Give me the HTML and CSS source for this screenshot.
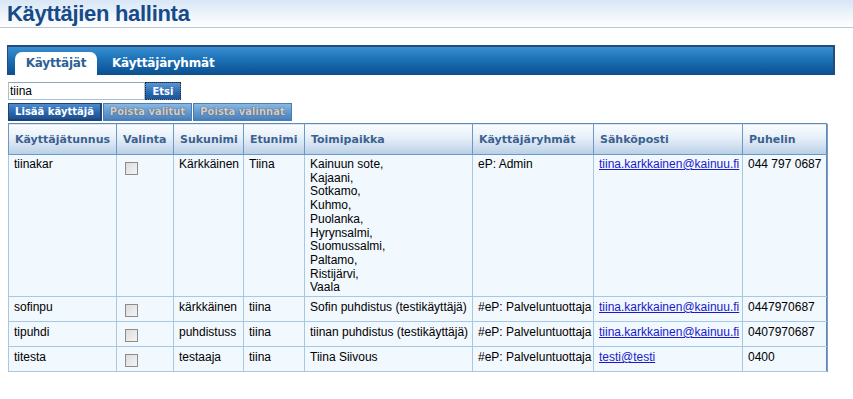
FILE: index.html
```html
<!DOCTYPE html>
<html lang="fi">
<head>
<meta charset="utf-8">
<title>Käyttäjien hallinta</title>
<link rel="stylesheet" href="styles.css">
</head>
<body>
<header class="page-head">
  <h1 class="page-title">Käyttäjien hallinta</h1>
</header>
<main class="content">
  <nav class="tabbar">
    <span class="tab tab-active">Käyttäjät</span>
    <span class="tab">Käyttäjäryhmät</span>
  </nav>
  <form class="search">
    <input class="search-input" type="text" value="tiina">
    <button type="button" class="btn btn-search">Etsi</button>
  </form>
  <div class="actions">
    <button type="button" class="btn btn-add">Lisää käyttäjä</button>
    <button type="button" class="btn btn-disabled">Poista valitut</button>
    <button type="button" class="btn btn-disabled">Poista valinnat</button>
  </div>
  <table class="users">
    <colgroup>
      <col class="c1"><col class="c2"><col class="c3"><col class="c4"><col class="c5"><col class="c6"><col class="c7"><col class="c8">
    </colgroup>
    <thead>
      <tr>
        <th>Käyttäjätunnus</th><th>Valinta</th><th>Sukunimi</th><th>Etunimi</th><th>Toimipaikka</th><th>Käyttäjäryhmät</th><th>Sähköposti</th><th>Puhelin</th>
      </tr>
    </thead>
    <tbody>
      <tr>
        <td>tiinakar</td>
        <td><input type="checkbox" class="chk"></td>
        <td>Kärkkäinen</td>
        <td>Tiina</td>
        <td>Kainuun sote,<br>Kajaani,<br>Sotkamo,<br>Kuhmo,<br>Puolanka,<br>Hyrynsalmi,<br>Suomussalmi,<br>Paltamo,<br>Ristijärvi,<br>Vaala</td>
        <td>eP: Admin</td>
        <td><a href="#">tiina.karkkainen@kainuu.fi</a></td>
        <td>044 797 0687</td>
      </tr>
      <tr>
        <td>sofinpu</td>
        <td><input type="checkbox" class="chk"></td>
        <td>kärkkäinen</td>
        <td>tiina</td>
        <td>Sofin puhdistus (testikäyttäjä)</td>
        <td>#eP: Palveluntuottaja</td>
        <td><a href="#">tiina.karkkainen@kainuu.fi</a></td>
        <td>0447970687</td>
      </tr>
      <tr>
        <td>tipuhdi</td>
        <td><input type="checkbox" class="chk"></td>
        <td>puhdistuss</td>
        <td>tiina</td>
        <td>tiinan puhdistus (testikäyttäjä)</td>
        <td>#eP: Palveluntuottaja</td>
        <td><a href="#">tiina.karkkainen@kainuu.fi</a></td>
        <td>0407970687</td>
      </tr>
      <tr>
        <td>titesta</td>
        <td><input type="checkbox" class="chk"></td>
        <td>testaaja</td>
        <td>tiina</td>
        <td>Tiina Siivous</td>
        <td>#eP: Palveluntuottaja</td>
        <td><a href="#">testi@testi</a></td>
        <td>0400</td>
      </tr>
    </tbody>
  </table>
</main>
</body>
</html>
```
FILE: styles.css
```css
html, body {
  margin: 0;
  padding: 0;
  background: #ffffff;
  font-family: "Liberation Sans", Arial, sans-serif;
  font-size: 12px;
  color: #000;
}

.page-head {
  height: 27px;
  background: linear-gradient(to bottom, #d8e6f6 0%, #eef4fb 55%, #ffffff 100%);
  border-bottom: 1px solid #b7c8d8;
  padding-left: 7px;
}

.page-title {
  margin: 0;
  font-family: "Liberation Sans", Arial, sans-serif;
  font-weight: bold;
  font-size: 22px;
  line-height: 27px;
  color: #164a88;
  letter-spacing: -0.3px;
}

.content {
  padding: 17px 0 0 7px;
}

.tabbar {
  width: 818px;
  height: 23px;
  padding: 5px 0 0 7px;
  border-top: 2px solid #254a80;
  border-left: 1px solid #254a80;
  border-right: 2px solid #254a80;
  background: linear-gradient(to bottom, #3a8fd0 0%, #1e74ba 40%, #0a4f90 100%);
  display: flex;
  align-items: flex-end;
}

.tab {
  font-family: "DejaVu Sans", Verdana, sans-serif;
  font-weight: bold;
  font-size: 12px;
  color: #ffffff;
  height: 23px;
  line-height: 22px;
  padding: 0 11px 0 15px;
  letter-spacing: -0.2px;
}

.tab-active {
  background: #ffffff;
  color: #2d5f96;
  border-radius: 7px 7px 0 0;
  width: 82px;
  box-sizing: border-box;
  padding: 0;
  text-align: center;
}

.search {
  display: flex;
  margin: 7px 0 0 1px;
  height: 18px;
}

.search-input {
  box-sizing: border-box;
  width: 137px;
  height: 18px;
  margin: 0;
  padding: 0 1px;
  border: 1px solid #a9bfd6;
  border-top-color: #8aa6c4;
  font-family: "Liberation Sans", Arial, sans-serif;
  font-size: 12px;
  color: #000;
  outline: none;
}

.btn {
  box-sizing: border-box;
  margin: 0;
  font-family: "DejaVu Sans", Verdana, sans-serif;
  font-weight: bold;
  font-size: 10px;
  cursor: pointer;
  padding: 0;
}

.btn-search {
  width: 36px;
  height: 18px;
  color: #fff;
  background: linear-gradient(to bottom, #5a96d4 0%, #2a68ae 60%, #1e5598 100%);
  border: 1px dotted #2a2a2a;
}

.actions {
  display: flex;
  gap: 1px;
  margin: 3px 0 0 1px;
  height: 18px;
}

.btn-add {
  width: 94px;
  height: 18px;
  color: #ffffff;
  background: linear-gradient(to bottom, #4d8bcd 0%, #2c68ad 55%, #1c4f8f 100%);
  border: 1px solid #1c4276;
  border-right-width: 2px;
  border-bottom-width: 2px;
}

.btn-disabled {
  height: 18px;
  color: #cfcfcf;
  text-shadow: 0 0 1px #5e5e5e, 0 0 1px #5e5e5e;
  background: linear-gradient(to bottom, #8ab8e4 0%, #6299d0 55%, #4d84bf 100%);
  border: 1px solid #4a7db5;
  border-bottom-width: 2px;
}

.btn-disabled:nth-child(2) { width: 89px; }
.btn-disabled:nth-child(3) { width: 99px; }

.users {
  margin: 2px 0 0 1px;
  width: 818px;
  table-layout: fixed;
  border-collapse: collapse;
  border: 1px solid #5d8ab8;
  box-shadow: 1px 1px 0 #7c9cc0;
  background: #f1f8fe;
}

.c1 { width: 108px; }
.c2 { width: 57px; }
.c3 { width: 70px; }
.c4 { width: 61px; }
.c5 { width: 168px; }
.c6 { width: 121px; }
.c7 { width: 149px; }
.c8 { width: 84px; }

.users th {
  height: 31px;
  box-sizing: border-box;
  padding: 0 6px;
  text-align: left;
  font-family: "DejaVu Sans", Verdana, sans-serif;
  font-weight: bold;
  font-size: 11px;
  color: #3c6190;
  background: linear-gradient(to bottom, #fbfdff 0%, #e6eff8 45%, #b9cfe6 100%);
  border-left: 1px solid #6b98c4;
  border-bottom: 1px solid #6b98c4;
  white-space: nowrap;
  overflow: hidden;
}

.users td {
  padding: 3px 5px 1px 5px;
  vertical-align: top;
  line-height: 13.7px;
  border-left: 1px solid #a8c7e2;
  border-bottom: 1px solid #a8c7e2;
  white-space: nowrap;
  overflow: hidden;
}

.users tbody tr + tr td {
  padding-top: 4px;
}

.users a {
  color: #1a1acc;
  text-decoration: underline;
}

.chk {
  appearance: none;
  -webkit-appearance: none;
  display: block;
  width: 13px;
  height: 13px;
  margin: 4px 0 3px 3px;
  box-sizing: border-box;
  border: 1px solid #8c8c8c;
  background: linear-gradient(to bottom right, #dcdcdc 0%, #f4f4f4 100%);
}

.users tbody tr + tr .chk {
  margin-top: 3px;
}
```
